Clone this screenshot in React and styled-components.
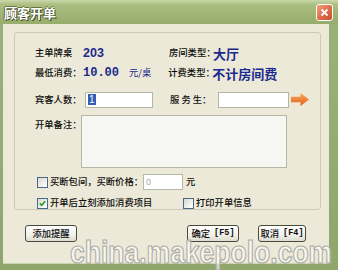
import React from 'react';
import styled, { createGlobalStyle } from 'styled-components';

const Global = createGlobalStyle`
  html, body { margin: 0; padding: 0; background: #ffffff; }
  body { font-family: "Noto Sans CJK SC", "Noto Sans", sans-serif; }
`;

const Window = styled.div`
  position: relative;
  width: 338px;
  height: 270px;
  display: flex;
  flex-direction: column;
  overflow: hidden;
  background: linear-gradient(to bottom, #9bb27a, #8ea66c);
`;

const TitleBar = styled.div`
  height: 24px;
  flex: none;
  display: flex;
  align-items: center;
  justify-content: space-between;
  padding: 0 5px 0 4px;
  background: linear-gradient(to bottom, #cbd8aa 0%, #adc083 18%, #a1b577 55%, #97ad6c 100%);
`;

const Title = styled.span`
  color: #ffffff;
  font-size: 13px;
  font-weight: 700;
  text-shadow: 1px 1px 0 #3f4d24, -1px 0 0 #55643a, 0 -1px 0 #66753f;
  line-height: 1;
`;

const CloseButton = styled.span`
  width: 15px;
  height: 15px;
  border: 1px solid #ffffff;
  border-radius: 3px;
  background: linear-gradient(135deg, #f0a082, #dd6a45 55%, #c8502f);
  display: flex;
  align-items: center;
  justify-content: center;
  margin-top: 1px;
`;

const Body = styled.div`
  flex: 1;
  margin: 0 9px 7px 3px;
  background: #ece9d8;
  padding: 8px 0 0 11px;
  display: flex;
  flex-direction: column;
  box-shadow: 0 1px 0 #c7d6b0;
`;

const Group = styled.div`
  width: 307px;
  height: 178px;
  box-sizing: border-box;
  border: 1px solid #cbc9b8;
  border-radius: 3px;
  padding: 13px 0 0 20px;
  display: flex;
  flex-direction: column;
`;

const Row = styled.div`
  display: flex;
  align-items: ${p => p.$top ? 'flex-start' : 'center'};
  height: ${p => p.$h}px;
  margin-top: ${p => p.$mt || 0}px;
`;

const Label = styled.span`
  width: ${p => p.$w}px;
  flex: none;
  font-size: 9.3px;
  font-weight: 500;
  color: #0d0d0d;
  white-space: nowrap;
  line-height: 1;
  padding-top: ${p => p.$pt || 0}px;
  margin-left: ${p => p.$ml || 0}px;
`;

const Value = styled.span`
  width: ${p => p.$w ? `${p.$w}px` : 'auto'};
  flex: none;
  color: #1b2a8f;
  font-weight: 700;
  font-size: ${p => p.$fs || 13}px;
  font-family: ${p => p.$mono ? '"Liberation Mono", monospace' : p.$latin ? '"Liberation Sans", sans-serif' : '"Noto Sans CJK SC", sans-serif'};
  line-height: 1;
  white-space: nowrap;
`;

const Unit = styled.span`
  color: #1b2a8f;
  font-size: 9.3px;
  margin-left: ${p => p.$ml || 0}px;
  line-height: 1;
`;

const TextInput = styled.div`
  width: ${p => p.$w}px;
  height: ${p => p.$h || 16}px;
  box-sizing: border-box;
  margin-left: ${p => p.$ml || 0}px;
  margin-right: ${p => p.$mr || 0}px;
  border: 1px solid #b4b8a6;
  background: ${p => p.$bg || '#ffffff'};
  display: flex;
  align-items: center;
  padding-left: 2px;
  flex: none;
`;

const Selected = styled.span`
  background: #2f5fb8;
  color: #ffffff;
  font-family: "Liberation Sans", sans-serif;
  font-size: 10px;
  line-height: 11px;
  padding: 0 1px;
`;

const Placeholder = styled.span`
  color: #a8a8a0;
  font-family: "Liberation Sans", sans-serif;
  font-size: 9px;
`;

const Box = styled.span`
  width: 11px;
  height: 11px;
  box-sizing: border-box;
  flex: none;
  border: 1px solid #48688c;
  background: linear-gradient(135deg, #d8d8d0, #f6f6f2 70%, #ffffff);
  margin-left: ${p => p.$ml || 0}px;
  margin-right: 2px;
  display: flex;
  align-items: center;
  justify-content: center;
`;

const Arrow = styled.svg`
  flex: none;
  margin-left: 2px;
`;

const ButtonRow = styled.div`
  display: flex;
  align-items: center;
  margin-top: 15px;
  padding-left: 11px;
`;

const Button = styled.div`
  width: ${p => p.$w}px;
  height: 17px;
  box-sizing: border-box;
  margin-left: ${p => p.$ml || 0}px;
  border: 1px solid #4a4a3c;
  border-radius: 3px;
  background: linear-gradient(to bottom, #ffffff, #f1f0ea 60%, #dedcd0);
  display: flex;
  align-items: center;
  justify-content: center;
  font-size: 9.3px;
  font-weight: 500;
  color: #0d0d0d;
  white-space: nowrap;
  line-height: 1;
`;

const Key = styled.span`
  font-family: "Liberation Mono", monospace;
  font-size: 8.5px;
  font-weight: 700;
  margin-left: 4px;
`;

const Watermark = styled.div`
  position: absolute;
  left: 70px;
  top: 237px;
  font-family: "Liberation Sans", sans-serif;
  font-weight: 700;
  font-size: 26.5px;
  line-height: 1;
  color: rgba(255, 255, 255, 0.6);
  -webkit-text-stroke: 1px #ababa6;
  transform: scaleY(1.2);
  transform-origin: left top;
  white-space: nowrap;
  pointer-events: none;
`;

function Check() {
  return (
    <svg width="7" height="7" viewBox="0 0 7 7">
      <path d="M0.8 3.4 L2.7 5.3 L6.2 1.2" fill="none" stroke="#22a022" strokeWidth="1.6" />
    </svg>
  );
}

export default function App() {
  return (
    <>
      <Global />
      <Window>
        <TitleBar>
          <Title>顾客开单</Title>
          <CloseButton>
            <svg width="9" height="9" viewBox="0 0 9 9">
              <path d="M1.5 1.5 L7.5 7.5 M7.5 1.5 L1.5 7.5" stroke="#ffffff" strokeWidth="1.8" />
            </svg>
          </CloseButton>
        </TitleBar>
        <Body>
          <Group>
            <Row $h={14}>
              <Label $w={48}>主单牌桌</Label>
              <Value $w={86} $latin $fs={12.5}>203</Value>
              <Label $w={44}>房间类型：</Label>
              <Value>大厅</Value>
            </Row>
            <Row $h={14} $mt={6}>
              <Label $w={48}>最低消费：</Label>
              <Value $mono $fs={12}>10.00</Value>
              <Unit $ml={10}>元/桌</Unit>
              <Label $w={44} $ml={17}>计费类型：</Label>
              <Value>不计房间费</Value>
            </Row>
            <Row $h={17} $mt={11}>
              <Label $w={48}>宾客人数：</Label>
              <TextInput $w={68} $ml={2} $mr={17}>
                <Selected>1</Selected>
              </TextInput>
              <Label $w={48}>服 务 生：</Label>
              <TextInput $w={71} />
              <Arrow width="18" height="13" viewBox="0 0 18 13">
                <defs>
                  <linearGradient id="ag" x1="0" y1="0" x2="0" y2="1">
                    <stop offset="0" stopColor="#f9a85a" />
                    <stop offset="1" stopColor="#e2621f" />
                  </linearGradient>
                </defs>
                <path d="M0 3.8 H9.5 V0 L18 6.5 L9.5 13 V9.2 H0 Z" fill="url(#ag)" />
              </Arrow>
            </Row>
            <Row $h={53} $mt={7} $top>
              <Label $w={46} $pt={5}>开单备注：</Label>
              <TextInput $w={206} $h={53} $bg="#f6f6f3" />
            </Row>
            <Row $h={16} $mt={6}>
              <Box $ml={2} />
              <Label $w={93}>买断包间，买断价格：</Label>
              <TextInput $w={40} $mr={3}>
                <Placeholder>0</Placeholder>
              </TextInput>
              <Label $w={12}>元</Label>
            </Row>
            <Row $h={12} $mt={7}>
              <Box $ml={2}><Check /></Box>
              <Label $w={133}>开单后立刻添加消费项目</Label>
              <Box />
              <Label $w={70}>打印开单信息</Label>
            </Row>
          </Group>
          <ButtonRow>
            <Button $w={52}>添加提醒</Button>
            <Button $w={52} $ml={110}>确定<Key>[F5]</Key></Button>
            <Button $w={48} $ml={19}>取消<Key>[F4]</Key></Button>
          </ButtonRow>
        </Body>
        <Watermark>china.makepolo.com</Watermark>
      </Window>
    </>
  );
}
